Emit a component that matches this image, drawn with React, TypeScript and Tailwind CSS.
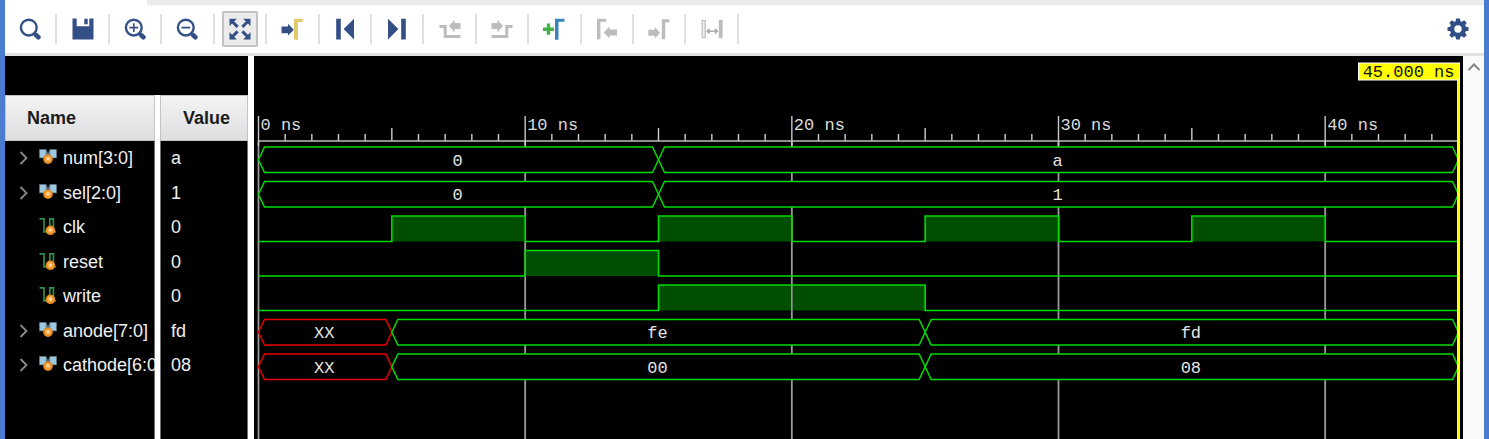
import React, { useLayoutEffect, useRef, useState } from "react";

const NAVY = "#334f86";
const GRAY = "#bcbcbc";

function Icon({ children }: { children: React.ReactNode }) {
  return (
    <svg width="22" height="22" viewBox="0 0 22 22" aria-hidden="true">
      {children}
    </svg>
  );
}

function Lens({ children }: { children?: React.ReactNode }) {
  return (
    <Icon>
      <circle cx="9.8" cy="9.6" r="7.9" fill="none" stroke={NAVY} strokeWidth="2.4" />
      <path d="M15.2 15.2l1 1" stroke={NAVY} strokeWidth="3" />
      <path d="M17 17l2.4 2.2" stroke={NAVY} strokeWidth="4.6" strokeLinecap="round" />
      {children}
    </Icon>
  );
}

type Tool = { label: string; active?: boolean; disabled?: boolean; icon: React.ReactNode };

const tools: Tool[] = [
  { label: "Search", icon: <Lens /> },
  {
    label: "Save",
    icon: (
      <Icon>
        <path d="M0.5 0.5H4.7V8.2H17.3V0.5H21.5V21.5H0.5Z" fill={NAVY} />
        <path d="M12.3 0.8h3.4v5.5h-3.4z" fill={NAVY} />
      </Icon>
    ),
  },
  {
    label: "Zoom in",
    icon: (
      <Lens>
        <path d="M9.8 5.2v8.8M5.4 9.6h8.8" stroke={NAVY} strokeWidth="1.6" />
      </Lens>
    ),
  },
  {
    label: "Zoom out",
    icon: (
      <Lens>
        <path d="M5.4 9.6h8.8" stroke={NAVY} strokeWidth="1.8" />
      </Lens>
    ),
  },
  {
    label: "Zoom fit",
    active: true,
    icon: (
      <Icon>
        <path
          d="M0.5 0.8H7.8L0.5 8.1ZM21.5 0.8V8.1L14.2 0.8ZM0.5 21.5V14.2L7.8 21.5ZM21.5 21.5H14.2L21.5 14.2Z"
          fill={NAVY}
        />
        <path d="M3.5 3.8L8.6 8.9M18.5 3.8L13.4 8.9M3.5 18.5L8.6 13.4M18.5 18.5L13.4 13.4" stroke={NAVY} strokeWidth="3" />
      </Icon>
    ),
  },
  {
    label: "Go to cursor",
    icon: (
      <Icon>
        <path d="M0.5 8.5H7V5.8L12.8 11.8L7 17.6V15.2H0.5Z" fill={NAVY} />
        <path d="M13 0.7H21.7V4H17V21.7H13Z" fill="#e3cb6b" />
      </Icon>
    ),
  },
  {
    label: "Go to time 0",
    icon: (
      <Icon>
        <path d="M2.2 0.7H6.8V21.5H2.2ZM20 0.7V21.5L9.6 11.1Z" fill={NAVY} />
      </Icon>
    ),
  },
  {
    label: "Go to last time",
    icon: (
      <Icon>
        <path d="M2 0.7L12.4 11.1L2 21.5ZM15.2 0.7H19.8V21.5H15.2Z" fill={NAVY} />
      </Icon>
    ),
  },
  {
    label: "Previous transition",
    disabled: true,
    icon: (
      <Icon>
        <path d="M0.5 8.5H6.2V18.5H21.5" fill="none" stroke={GRAY} strokeWidth="3" />
        <path d="M9.8 8L15.6 2V5H21.5V11H15.6V14Z" fill={GRAY} />
      </Icon>
    ),
  },
  {
    label: "Next transition",
    disabled: true,
    icon: (
      <Icon>
        <path d="M0.5 18.5H15.8V8.5H21.5" fill="none" stroke={GRAY} strokeWidth="3" />
        <path d="M12.2 8L6.4 2V5H0.5V11H6.4V14Z" fill={GRAY} />
      </Icon>
    ),
  },
  {
    label: "Add marker",
    icon: (
      <Icon>
        <path d="M5.5 5.6V16.8M0 11.2H11" stroke="#43b049" strokeWidth="3.4" />
        <path d="M12 0.7H21.5V3.8H15.5V21.7H12Z" fill="#3a83b8" />
      </Icon>
    ),
  },
  {
    label: "Previous marker",
    disabled: true,
    icon: (
      <Icon>
        <path d="M1 0.7H10.2V3.8H4.4V21.2H1Z" fill={GRAY} />
        <path d="M7.8 14.5L13.4 8.6V11.4H21V17.6H13.4V20.4Z" fill={GRAY} />
      </Icon>
    ),
  },
  {
    label: "Next marker",
    disabled: true,
    icon: (
      <Icon>
        <path d="M0.3 11.8H6.8V9L12.2 14.8L6.8 20.6V17.8H0.3Z" fill={GRAY} />
        <path d="M13.8 1.2H21.5V4.2H17.2V21.2H13.8Z" fill={GRAY} />
      </Icon>
    ),
  },
  {
    label: "Swap cursors",
    disabled: true,
    icon: (
      <Icon>
        <path d="M1.2 2.5H4.2V19.5H1.2Z" fill="#f2f2f2" stroke={GRAY} strokeWidth="1.2" />
        <path d="M17.8 1.8H21.6V20.2H17.8Z" fill={GRAY} />
        <path d="M6 13.2H16.5" stroke="#a6a6a6" strokeWidth="1.4" />
        <path d="M5 13.2L8.6 10V16.4ZM17.4 13.2L13.8 10V16.4Z" fill="#a6a6a6" />
      </Icon>
    ),
  },
];

function Gear() {
  return (
    <Icon>
      {[0, 45, 90, 135].map((a) => (
        <path key={a} d="M9.2 0.5H12.8L13.6 4V18L12.8 21.5H9.2L8.4 18V4Z" fill={NAVY} transform={`rotate(${a} 11 11)`} />
      ))}
      <circle cx="11" cy="11" r="8" fill={NAVY} />
      <circle cx="11" cy="11" r="3.7" fill="#fff" />
    </Icon>
  );
}

function Ball({ cx, cy }: { cx: number; cy: number }) {
  return (
    <>
      <circle cx={cx} cy={cy} r="4.8" fill="#e98a1c" />
      <circle cx={cx} cy={cy - 0.3} r="3" fill="#f7ab4c" />
      <circle cx={cx} cy={cy - 0.4} r="1.5" fill="#ffdca6" />
    </>
  );
}

function BusIcon() {
  return (
    <svg width="18" height="18" viewBox="0 0 18 18" className="shrink-0" aria-hidden="true">
      <path d="M0.2 0.3H7.4L9 4L10.6 0.3H17.8V9.2H0.2Z" fill="#5d7482" />
      <path d="M0.8 0.8H6.8V8.6H0.8ZM11.2 0.8H17.2V8.6H11.2Z" fill="#9cc9e0" />
      <Ball cx={9} cy={10.2} />
    </svg>
  );
}

function WireIcon() {
  return (
    <svg width="18" height="18" viewBox="0 0 18 18" className="shrink-0" aria-hidden="true">
      <path d="M0.5 0.9H5V13.8H10.8V0.9H14.4V13.8H17" fill="none" stroke="#2f8f4a" strokeWidth="1.7" />
      <Ball cx={11.4} cy={12.3} />
    </svg>
  );
}

type Segment = { from: number; to: number; text: string; unknown?: boolean };
type Signal =
  | { name: string; value: string; kind: "bus"; segments: Segment[] }
  | { name: string; value: string; kind: "wire"; high: [number, number][] };

const END = 45;

const signals: Signal[] = [
  { name: "num[3:0]", value: "a", kind: "bus", segments: [{ from: 0, to: 15, text: "0" }, { from: 15, to: 45, text: "a" }] },
  { name: "sel[2:0]", value: "1", kind: "bus", segments: [{ from: 0, to: 15, text: "0" }, { from: 15, to: 45, text: "1" }] },
  { name: "clk", value: "0", kind: "wire", high: [[5, 10], [15, 20], [25, 30], [35, 40]] },
  { name: "reset", value: "0", kind: "wire", high: [[10, 15]] },
  { name: "write", value: "0", kind: "wire", high: [[15, 25]] },
  {
    name: "anode[7:0]",
    value: "fd",
    kind: "bus",
    segments: [
      { from: 0, to: 5, text: "XX", unknown: true },
      { from: 5, to: 25, text: "fe" },
      { from: 25, to: 45, text: "fd" },
    ],
  },
  {
    name: "cathode[6:0]",
    value: "08",
    kind: "bus",
    segments: [
      { from: 0, to: 5, text: "XX", unknown: true },
      { from: 5, to: 25, text: "00" },
      { from: 25, to: 45, text: "08" },
    ],
  },
];

const AXIS_Y = 85;
const WAVE_H = 25.5;
const rowTop = (i: number) => 91 + i * 34.5;

function Waveform() {
  const ref = useRef<SVGSVGElement>(null);
  const [width, setWidth] = useState(1209);

  useLayoutEffect(() => {
    const el = ref.current;
    if (!el) return;
    const measure = () => setWidth(el.getBoundingClientRect().width);
    measure();
    const observer = new ResizeObserver(measure);
    observer.observe(el);
    return () => observer.disconnect();
  }, []);

  const x = (t: number) => 4.5 + (t * (width - 9)) / END;
  const ticks = Array.from({ length: END }, (_, t) => t);
  const majors = ticks.filter((t) => t % 10 === 0);
  const minors = ticks.filter((t) => t % 10 !== 0);
  const cursor = x(END);

  return (
    <svg
      ref={ref}
      className="block h-full min-w-0 flex-1 bg-black font-['Liberation_Mono',monospace] text-[17px]"
      role="img"
      aria-label="Waveforms"
    >
      {majors.map((t) => (
        <g key={t}>
          <line x1={x(t)} x2={x(t)} y1={AXIS_Y} y2="100%" stroke="#9a9a9a" strokeWidth="1.8" />
          <line x1={x(t)} x2={x(t)} y1="60" y2="90" stroke="#c8c8c8" strokeWidth="1.4" />
          <text x={x(t) + 2} y="74" fill="#dcdcdc">{`${t} ns`}</text>
        </g>
      ))}
      {minors.map((t) => (
        <line key={t} x1={x(t)} x2={x(t)} y1={t % 5 === 0 ? 72 : 78} y2={AXIS_Y} stroke="#d0d0d0" strokeWidth="1.4" />
      ))}
      <line x1={x(0)} x2={cursor} y1={AXIS_Y} y2={AXIS_Y} stroke="#bdbdbd" strokeWidth="1.6" />

      {signals.map((s, i) => {
        const top = rowTop(i);
        const bottom = top + WAVE_H;
        const mid = top + WAVE_H / 2;
        if (s.kind === "bus") {
          return (
            <g key={s.name}>
              {s.segments.map((g) => {
                const a = x(g.from);
                const b = x(g.to);
                return (
                  <g key={g.from}>
                    <path
                      d={`M${a} ${mid}L${a + 6} ${top}H${b - 6}L${b} ${mid}L${b - 6} ${bottom}H${a + 6}Z`}
                      fill="#000"
                      stroke={g.unknown ? "#e60000" : "#00dc00"}
                      strokeWidth="1.5"
                    />
                    <text x={(a + b) / 2 - 1} y={mid + 6} textAnchor="middle" fill="#e6e6e6">
                      {g.text}
                    </text>
                  </g>
                );
              })}
            </g>
          );
        }
        let d = `M${x(0)} ${bottom}`;
        s.high.forEach(([a, b]) => {
          d += `H${x(a)}V${top}H${x(b)}V${bottom}`;
        });
        d += `H${cursor}`;
        return (
          <g key={s.name}>
            {s.high.map(([a, b]) => (
              <g key={a}>
                <rect x={x(a)} y={top} width={x(b) - x(a)} height={WAVE_H} fill="#004e00" />
                {majors
                  .filter((t) => t > a && t < b)
                  .map((t) => (
                    <line key={t} x1={x(t)} x2={x(t)} y1={top} y2={bottom} stroke="#9a9a9a" strokeWidth="1.6" />
                  ))}
              </g>
            ))}
            <path d={d} fill="none" stroke="#00dc00" strokeWidth="1.6" />
          </g>
        );
      })}

      <line x1={cursor} x2={cursor} y1="24" y2="100%" stroke="#ffff00" strokeWidth="3" />
      <rect x={cursor - 100} y="7" width="101" height="17" fill="#ffff00" stroke="#fff" />
      <text x={cursor - 4} y="21" textAnchor="end" fill="#111">
        45.000 ns
      </text>
    </svg>
  );
}

export default function App() {
  return (
    <div className="flex h-screen flex-col overflow-hidden border-x-[5px] border-[#4a7ccf] bg-white font-['Liberation_Sans',Arial,sans-serif] text-[18px] leading-5">
      <div className="flex h-[5px] shrink-0">
        <div className="w-[142px]" />
        <div className="flex-1 bg-[#ececec]" />
      </div>

      <div
        role="toolbar"
        aria-label="Waveform"
        className="flex h-[51px] shrink-0 items-center justify-between border-b-[3px] border-[#e2e2e2] pr-[15px]"
      >
        <div className="flex h-[30px] w-[734px] items-center">
          {tools.map((t) => (
            <div key={t.label} className="flex h-[30px] flex-1 items-center justify-center border-r-2 border-[#e0e0e0]">
              <button
                type="button"
                aria-label={t.label}
                aria-pressed={t.active}
                disabled={t.disabled}
                className={
                  t.active
                    ? "flex size-9 shrink-0 items-center justify-center rounded-xs border-2 border-[#c2c2c2] bg-[#ebebeb]"
                    : "flex size-9 shrink-0 items-center justify-center"
                }
              >
                {t.icon}
              </button>
            </div>
          ))}
        </div>
        <button type="button" aria-label="Settings">
          <Gear />
        </button>
      </div>

      <div className="flex min-h-0 flex-1">
        <div className="flex w-[243px] shrink-0 flex-col bg-black pt-[39px]">
          <table className="h-full w-full table-fixed border-separate border-spacing-0 text-left text-[#f0f0f0]">
            <thead>
              <tr className="h-[46px] text-[#1c1c1c]">
                <th className="w-[155px] border-r-[5px] border-white bg-linear-to-b from-[#f4f4f4] to-[#dedee0] pl-[22px] font-bold shadow-[inset_0_0_0_1px_#c4c4c4]">
                  Name
                </th>
                <th className="bg-linear-to-b from-[#f4f4f4] to-[#dedee0] pl-[23px] font-bold shadow-[inset_0_0_0_1px_#c4c4c4]">Value</th>
              </tr>
            </thead>
            <tbody>
              {signals.map((s) => (
                <tr key={s.name} className="h-[34px] even:h-[35px]">
                  <td className="overflow-hidden border-r-[5px] border-white p-0 whitespace-nowrap shadow-[inset_-1px_0_0_#707070]">
                    <div className="flex items-center pl-[14px]">
                      {s.kind === "bus" ? (
                        <button type="button" aria-label={`Expand ${s.name}`} className="w-5 shrink-0">
                          <svg width="10" height="14" viewBox="0 0 10 14" className="block" aria-hidden="true">
                            <path d="M1.5 1L7.5 7L1.5 13" fill="none" stroke="#8c8c8c" strokeWidth="1.8" />
                          </svg>
                        </button>
                      ) : (
                        <span className="w-5 shrink-0" />
                      )}
                      {s.kind === "bus" ? <BusIcon /> : <WireIcon />}
                      <span className="pl-[6px]">{s.name}</span>
                    </div>
                  </td>
                  <td className="p-0 pl-[11px] shadow-[inset_1px_0_0_#707070,inset_-1px_0_0_#707070]">{s.value}</td>
                </tr>
              ))}
              <tr>
                <td className="border-r-[5px] border-white p-0 shadow-[inset_-1px_0_0_#707070]" />
                <td className="p-0 shadow-[inset_1px_0_0_#707070,inset_-1px_0_0_#707070]" />
              </tr>
            </tbody>
          </table>
        </div>
        <div className="w-[6px] shrink-0 bg-white" />
        <Waveform />
        <div className="flex w-[21px] shrink-0 flex-col items-center bg-[#fafafa] pt-[6px]">
          <button type="button" aria-label="Scroll up">
            <svg width="14" height="10" viewBox="0 0 14 10" className="block" aria-hidden="true">
              <path d="M1.5 8L7 2.5L12.5 8" fill="none" stroke="#868686" strokeWidth="2" />
            </svg>
          </button>
        </div>
      </div>
    </div>
  );
}
